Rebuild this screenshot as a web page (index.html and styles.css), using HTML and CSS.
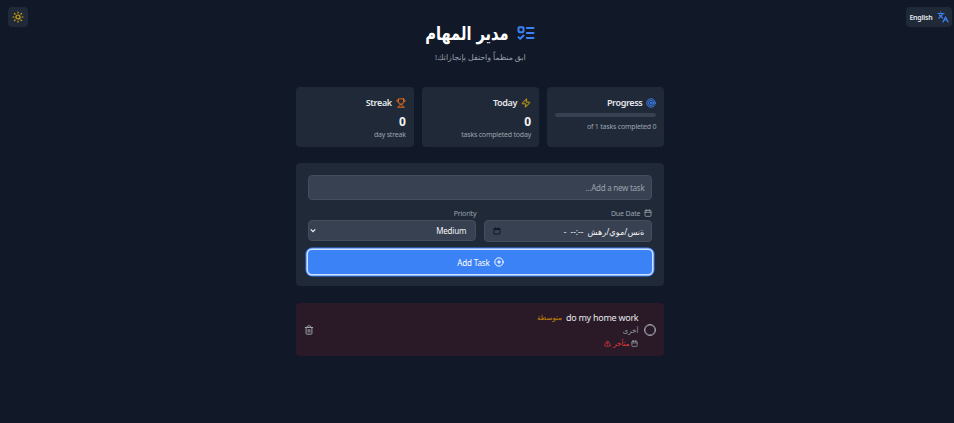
FILE: index.html
```html
<!DOCTYPE html>
<html lang="ar" dir="rtl">
<head>
<meta charset="utf-8">
<title>مدير المهام</title>
<link rel="stylesheet" href="styles.css">
</head>
<body>
<div class="topbar">
  <button class="lang"><svg class="icon i12" viewBox="0 0 24 24"><path d="m5 8 6 6M4 14l6-6 2-3M2 5h12M7 2h1M22 22l-5-10-5 10M14 18h6"/></svg><span>English</span></button>
  <button class="theme"><svg class="icon i12" viewBox="0 0 24 24"><circle cx="12" cy="12" r="4"/><path d="M12 2v2M12 20v2M4.93 4.93l1.41 1.41M17.66 17.66l1.41 1.41M2 12h2M20 12h2M6.34 17.66l-1.41 1.41M19.07 4.93l-1.41 1.41"/></svg></button>
</div>
<main>
  <header>
    <h1><svg class="icon logo" viewBox="0 0 24 24"><rect x="3" y="5" width="6" height="6" rx="1"/><path d="m3 17 2 2 4-4M13 6h8M13 12h8M13 18h8"/></svg><span>مدير المهام</span></h1>
    <p>ابق منظماً واحتفل بإنجازاتك!</p>
  </header>
  <section class="stats">
    <article class="card">
      <h2><svg class="icon blue" viewBox="0 0 24 24"><circle cx="12" cy="12" r="10"/><circle cx="12" cy="12" r="6"/><circle cx="12" cy="12" r="2"/></svg><span>Progress</span></h2>
      <div class="track"></div>
      <p class="note">0 of 1 tasks completed</p>
    </article>
    <article class="card">
      <h2><svg class="icon yellow" viewBox="0 0 24 24"><path d="M4 14a1 1 0 0 1-.78-1.63l9.9-10.2a.5.5 0 0 1 .86.46l-1.92 6.02A1 1 0 0 0 13 10h7a1 1 0 0 1 .78 1.63l-9.9 10.2a.5.5 0 0 1-.86-.46l1.92-6.02A1 1 0 0 0 11 14z"/></svg><span>Today</span></h2>
      <strong>0</strong>
      <p>tasks completed today</p>
    </article>
    <article class="card">
      <h2><svg class="icon orange" viewBox="0 0 24 24"><path d="M6 9H4.500a2.500 2.500 0 0 1 0-5H6M18 9h1.500a2.500 2.500 0 0 0 0-5H18M4 22h16M10 14.660V17c0 .55-.47.98-.97 1.210C7.850 18.750 7 20.240 7 22M14 14.660V17c0 .55.470.98.970 1.210C16.150 18.750 17 20.240 17 22M18 2H6v7a6 6 0 0 0 12 0V2Z"/></svg><span>Streak</span></h2>
      <strong>0</strong>
      <p>day streak</p>
    </article>
  </section>
  <section class="form">
    <div class="field task-name">Add a new task...</div>
    <div class="options">
      <div>
        <div class="label"><svg class="icon i8" viewBox="0 0 24 24"><rect x="3" y="4" width="18" height="18" rx="2"/><path d="M16 2v4M8 2v4M3 10h18"/></svg><span>Due Date</span></div>
        <div class="field date"><span class="date-text">ةنس/موي/رهش &nbsp;--:-- &nbsp;-</span><svg class="picker" viewBox="0 0 16 16"><path d="M3 2h1V1h2v1h4V1h2v1h1a2 2 0 0 1 2 2v9a2 2 0 0 1-2 2H3a2 2 0 0 1-2-2V4a2 2 0 0 1 2-2Zm0 4v7h10V6Z" fill-rule="evenodd"/></svg></div>
      </div>
      <div>
        <div class="label"><span>Priority</span></div>
        <div class="field select"><span>Medium</span><svg class="chevron" viewBox="0 0 8 6"><path d="m1 1.500 3 3 3-3"/></svg></div>
      </div>
    </div>
    <button class="add"><svg class="icon" viewBox="0 0 24 24"><circle cx="12" cy="12" r="10"/><path d="M8 12h8M12 8v8"/></svg><span>Add Task</span></button>
  </section>
  <section class="task">
    <span class="check"></span>
    <div class="details">
      <div class="title"><span dir="ltr">do my home work</span><em>متوسطة</em></div>
      <div class="category">أخرى</div>
      <div class="due"><svg class="icon i7 gray" viewBox="0 0 24 24"><rect x="3" y="4" width="18" height="18" rx="2"/><path d="M16 2v4M8 2v4M3 10h18"/></svg><span>متأخر</span><svg class="icon i7" viewBox="0 0 24 24"><path d="m21.730 18-8-14a2 2 0 0 0-3.480 0l-8 14A2 2 0 0 0 4 21h16a2 2 0 0 0 1.730-3M12 9v4M12 17h.01"/></svg></div>
    </div>
    <svg class="icon gray trash" viewBox="0 0 24 24"><path d="M3 6h18M19 6v14a2 2 0 0 1-2 2H7a2 2 0 0 1-2-2V6M8 6V4a2 2 0 0 1 2-2h4a2 2 0 0 1 2 2v2M10 11v6M14 11v6"/></svg>
  </section>
</main>
</body>
</html>
```
FILE: styles.css
```css
* { box-sizing: border-box; }
body { margin: 0; height: 423px; overflow: hidden; background: #111827; color: #f3f4f6; font-family: "Noto Sans", "DejaVu Sans", sans-serif; font-size: 8px; }
button { border: 0; font: inherit; color: inherit; padding: 0; display: flex; align-items: center; justify-content: center; }
h1, h2, p { margin: 0; }
.icon { width: 10px; height: 10px; flex: none; fill: none; stroke: currentColor; stroke-width: 2.4; stroke-linecap: round; stroke-linejoin: round; }
.i12 { width: 12px; height: 12px; }
.i8 { width: 8px; height: 8px; }
.i7 { width: 7px; height: 7px; }
.blue { color: #3b82f6; }
.yellow { color: #d6a60c; }
.orange { color: #e2681a; }
.gray { color: #9ca3af; }
.topbar { display: flex; justify-content: space-between; padding: 7px 2px 0 8px; height: 27px; }
.lang, .theme { height: 20px; background: #1f2937; border-radius: 4px; }
.lang { width: 46px; gap: 4px; font-size: 7px; font-weight: 600; letter-spacing: -0.2px; color: #e5e7eb; }
.lang svg { color: #3b82f6; }
.theme { width: 20px; color: #d6a60c; }
main { width: 368px; margin: -5px 289.6px 0 auto; }
header { height: 65px; text-align: center; }
header h1 { display: flex; align-items: center; justify-content: center; gap: 7px; height: 24px; font-family: "DejaVu Sans Condensed", "DejaVu Sans", sans-serif; font-stretch: condensed; font-size: 16.3px; line-height: 24px; color: #fff; }
header h1 span { transform: scaleY(1.15); }
header p { margin-top: 5px; font-size: 7.8px; line-height: 12px; color: #9ca3af; }
.logo { width: 20px; height: 20px; margin-top: -2px; color: #3b82f6; }
.stats { display: grid; grid-template-columns: repeat(3, 1fr); gap: 8px; }
.card { height: 60px; padding: 9px 8px; border-radius: 4px; background: #1f2937; }
.card h2 { display: flex; align-items: center; gap: 4px; height: 13px; font-size: 9px; font-weight: 600; letter-spacing: -0.35px; color: #e5e7eb; }
.card strong { display: block; height: 16px; margin-top: 5px; font-size: 12px; line-height: 16px; }
.card p { font-size: 7px; line-height: 9px; letter-spacing: -0.2px; color: #9ca3af; }
.track { height: 4px; margin-top: 4px; border-radius: 2px; background: #374151; }
.card .note { margin-top: 5px; }
.form { height: 123px; margin-top: 16px; padding: 12px; border-radius: 4px; background: #1f2937; }
.field { display: flex; align-items: center; border: 1px solid #434d5c; border-radius: 4px; background: #374151; }
.task-name { height: 25px; padding: 0 7px; letter-spacing: -0.25px; color: #9ca3af; font-size: 8px; }
.options { display: grid; grid-template-columns: 1fr 1fr; gap: 8px; height: 42px; margin-top: 8px; }
.label { display: flex; align-items: center; gap: 4px; height: 12px; padding-bottom: 2px; font-size: 7px; letter-spacing: -0.15px; color: #9ca3af; }
.date { height: 22px; justify-content: space-between; padding: 0 7px 0 8px; font-size: 8.2px; }
.picker { width: 8px; height: 8px; fill: #111827; }
.select { height: 21px; justify-content: space-between; padding: 0 9px 0 1px; letter-spacing: -0.15px; }
.chevron { width: 6px; height: 5px; fill: none; stroke: #f3f4f6; stroke-width: 1.6; }
.add { width: 100%; height: 24px; gap: 4px; border-radius: 4px; background: #3b82f6; box-shadow: 0 0 0 1.5px #cfe2ff, 0 0 0 2.5px #3b82f6; color: #fff; font-size: 8px; letter-spacing: -0.15px; }
.task { display: flex; align-items: center; height: 53px; margin-top: 17px; padding: 0 8px; border-radius: 4px; background: #2a1a27; }
.check { width: 12px; height: 12px; border: 1.4px solid #9ca3af; border-radius: 50%; box-shadow: inset 0 0 0 0.4px #9ca3af; }
.details { flex: 1; margin-right: 6px; }
.title { display: flex; align-items: center; gap: 4px; height: 15px; font-size: 9px; color: #e5e7eb; }
.title span { letter-spacing: -0.27px; }
.title em { font-style: normal; font-size: 7px; color: #ca8a04; }
.category { height: 12px; line-height: 12px; font-size: 7px; color: #9ca3af; }
.due { display: flex; align-items: center; gap: 2px; height: 13px; font-size: 7px; color: #ef3b3b; }
```
